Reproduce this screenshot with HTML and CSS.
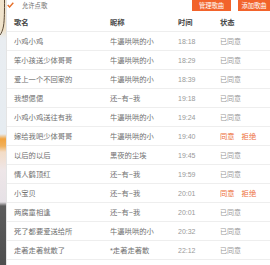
FILE: index.html
```html
<!DOCTYPE html>
<html lang="zh-CN">
<head>
    <meta charset="UTF-8">
    <meta name="viewport" content="width=device-width, initial-scale=1.0">
    <title>点歌列表</title>
    <link rel="stylesheet" href="styles.css">
</head>
<body>
    <div class="frame">
        <div class="backdrop">
            <svg width="6" height="40" viewBox="0 0 6 40">
                <path d="M4.5 0 C4.5 10 4.5 20 3.5 26 C2.8 30 1.5 33 0 35" fill="none" stroke="#5b4a36" stroke-width="1"/>
            </svg>
        </div>
        <div class="panel">
            <div class="toolbar">
                <label class="allow">
                    <svg class="tick" width="7" height="6" viewBox="0 0 7 6">
                        <path d="M0.7 3 L2.6 5 L6.3 0.8" fill="none" stroke="#e6702a" stroke-width="1.4"/>
                    </svg>
                    <span>允许点歌</span>
                </label>
                <div class="actions">
                    <button class="btn">管理歌曲</button>
                    <button class="btn btn-last">添加歌曲</button>
                </div>
            </div>

            <div class="row head">
                <span class="col-name">歌名</span>
                <span>昵称</span>
                <span>时间</span>
                <span>状态</span>
            </div>

            <div class="row"><span class="col-name">小鸡小鸡</span><span>牛逼哄哄的小</span><span class="time">18:18</span><span class="done">已同意</span></div>
            <div class="row"><span class="col-name">笨小孩送少体哥哥</span><span>牛逼哄哄的小</span><span class="time">18:29</span><span class="done">已同意</span></div>
            <div class="row"><span class="col-name">爱上一个不回家的</span><span>牛逼哄哄的小</span><span class="time">18:39</span><span class="done">已同意</span></div>
            <div class="row"><span class="col-name">我想偲偲</span><span>还~有~我</span><span class="time">19:18</span><span class="done">已同意</span></div>
            <div class="row"><span class="col-name">小鸡小鸡送往有我</span><span>牛逼哄哄的小</span><span class="time">19:24</span><span class="done">已同意</span></div>
            <div class="row"><span class="col-name">嫁给我吧少体哥哥</span><span>牛逼哄哄的小</span><span class="time">19:40</span><span class="todo"><a>同意</a><a>拒绝</a></span></div>
            <div class="row"><span class="col-name">以后的以后</span><span>黑夜的尘埃</span><span class="time">19:45</span><span class="done">已同意</span></div>
            <div class="row"><span class="col-name">情人鹤顶红</span><span>还~有~我</span><span class="time">19:59</span><span class="done">已同意</span></div>
            <div class="row"><span class="col-name">小宝贝</span><span>还~有~我</span><span class="time">20:01</span><span class="todo"><a>同意</a><a>拒绝</a></span></div>
            <div class="row"><span class="col-name">两腐童相逢</span><span>还~有~我</span><span class="time">20:01</span><span class="done">已同意</span></div>
            <div class="row"><span class="col-name">死了都要爱送给所</span><span>牛逼哄哄的小</span><span class="time">20:32</span><span class="done">已同意</span></div>
            <div class="row"><span class="col-name">走著走著就散了</span><span>*走著走著散</span><span class="time">22:12</span><span class="done">已同意</span></div>
        </div>
    </div>
</body>
</html>
```

FILE: styles.css
```css
body {
    margin: 0;
    font-family: "Liberation Sans", "Noto Sans CJK SC", sans-serif;
    background: #ffffff;
}

.frame {
    display: flex;
    width: 270px;
    height: 265px;
    overflow: hidden;
}

.backdrop {
    width: 6px;
    flex-shrink: 0;
    background: linear-gradient(to bottom,
        #f1e4cc 0, #efe2ca 30px,
        #e9edf1 38px, #e6ecf1 134px,
        #f2a33e 139px, #f1b05a 146px,
        #f3dcc6 152px, #eee6e8 170px,
        #e6e1e6 202px, #5c5c5c 206px, #4e4e4e 265px);
}

.backdrop svg {
    display: block;
}

.panel {
    flex: 1;
    background: #fff;
    border-left: 1px solid #e4e4e4;
    color: #707070;
    font-size: 7.3px;
}

.toolbar {
    display: flex;
    justify-content: space-between;
    height: 13px;
}

.allow {
    display: flex;
    align-items: center;
    height: 10px;
    font-size: 6.3px;
    color: #707070;
}

.tick {
    display: block;
    flex-shrink: 0;
    margin-right: 8px;
}

.actions {
    display: flex;
    gap: 7px;
}

.btn {
    width: 39px;
    height: 11px;
    padding: 0;
    border: none;
    background: #f2632b;
    color: #fff;
    font-family: inherit;
    font-size: 6.3px;
    line-height: 11px;
}

.btn-last {
    width: 32px;
}

.row {
    display: grid;
    grid-template-columns: 103px 68px 42px 1fr;
    align-items: center;
    height: 19px;
    box-sizing: border-box;
    border-bottom: 1px solid #eeeeee;
}

.col-name {
    padding-left: 7px;
}

.head {
    color: #444;
    font-weight: bold;
}

.time,
.done {
    color: #999;
    font-size: 7px;
}

.todo {
    display: flex;
    gap: 7px;
}

.todo a {
    color: #ec6a36;
}
```
